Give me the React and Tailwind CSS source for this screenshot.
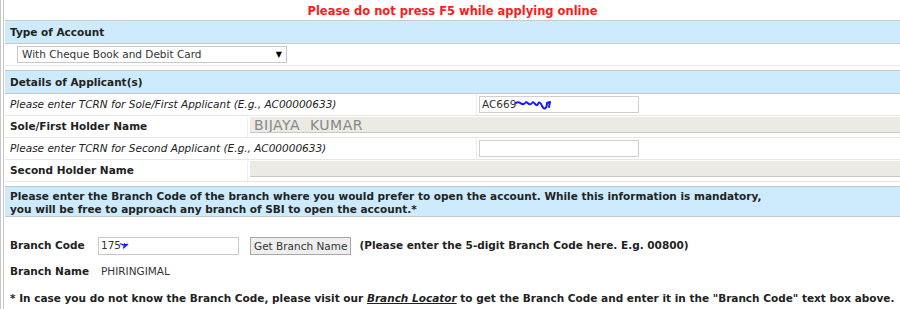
import React from "react";

const Scribble = ({ className, d }) => (
  <svg className={className} viewBox="0 0 40 14" fill="none" stroke="#1a1aff" strokeWidth="2" strokeLinecap="round" strokeLinejoin="round">
    <path d={d} />
  </svg>
);

const SectionHeader = ({ children }) => (
  <div className="bg-[#cdebfc] border-y border-[#c8c8c8] px-[5px] py-[4px] font-bold text-[#222] leading-[14px]">
    {children}
  </div>
);

const TcrnRow = ({ label, value }) => (
  <div className="flex h-[22px] border-b border-[#e6e6e6]">
    <div className="w-[472px] pl-[5px] italic text-[#222] border-r border-[#eeeeee] flex items-center">{label}</div>
    <div className="flex items-center pl-[2px]">
      <div className="relative w-[160px] h-[17px] border border-[#cfcfcf] bg-white flex items-center pl-[2px] text-[#333]">
        {value}
      </div>
    </div>
  </div>
);

const NameRow = ({ label, value }) => (
  <div className="flex h-[22px] border-b border-[#e6e6e6] pt-[1px]">
    <div className="w-[243px] shrink-0 pl-[5px] font-bold text-[#222] border-r border-[#eeeeee] flex items-center">{label}</div>
    <div className="flex-1 pl-[2px]">
      <div className="h-[16px] bg-[#ebebe4] border-b border-[#c8c8c8] pl-[4px] text-[14px] leading-[17px] text-[#888] tracking-[0.5px] whitespace-pre overflow-hidden">
        {value}
      </div>
    </div>
  </div>
);

export default function App() {
  return (
    <div className="w-[900px] h-[309px] bg-white overflow-hidden text-[10.5px] font-['DejaVu_Sans','Liberation_Sans',sans-serif]">
      <div className="h-full border-l-4 border-double border-[#c8c8c8] pl-[1px]">
        <div className="h-[20px] pt-[3px] flex items-center justify-center font-bold text-[11.5px] text-[#ff1a1a]">
          Please do not press F5 while applying online
        </div>

        <SectionHeader>Type of Account</SectionHeader>
        <div className="h-[22px] border-b border-[#e6e6e6] flex items-center pl-[12px]">
          <div className="w-[270px] h-[17px] border border-[#c8c8c8] bg-white flex items-center justify-between px-[4px] text-[#333]">
            <span>With Cheque Book and Debit Card</span>
            <span className="text-[8px] text-black">▼</span>
          </div>
        </div>

        <div className="h-[4px]" />
        <SectionHeader>Details of Applicant(s)</SectionHeader>

        <TcrnRow
          label="Please enter TCRN for Sole/First Applicant (E.g., AC00000633)"
          value={
            <>
              <span>AC669</span>
              <Scribble className="w-[40px] h-[14px] -ml-[2px]" d="M2 5 C6 2 8 9 11 5 C13 2 15 9 18 5 C20 2 22 10 24 6 C25 3 27 5 28 8 C30 12 33 11 33 5 L36 4 L35 9" />
            </>
          }
        />
        <NameRow label="Sole/First Holder Name" value="BIJAYA  KUMAR" />
        <TcrnRow label="Please enter TCRN for Second Applicant (E.g., AC00000633)" value="" />
        <NameRow label="Second Holder Name" value="" />

        <div className="h-[4px]" />
        <div className="bg-[#cdebfc] border-y border-[#c8c8c8] px-[5px] pt-[3px] font-bold text-[#222] leading-[13px]">
          Please enter the Branch Code of the branch where you would prefer to open the account. While this information is mandatory,
          <br />
          you will be free to approach any branch of SBI to open the account.*
        </div>

        <div className="pl-[5px] mt-[20px] flex items-center h-[18px] text-[#222]">
          <span className="font-bold w-[88px]">Branch Code</span>
          <div className="w-[141px] h-[18px] border border-[#c8c8c8] flex items-center pl-[2px] text-[#333]">
            <span>175</span>
            <Scribble className="w-[22px] h-[12px] -ml-[2px]" d="M2 3 L10 5 L8 11 L16 4 L6 5 M10 3 L12 7" />
          </div>
          <button className="ml-[11px] h-[18px] px-[3px] border border-[#a8a8a8] bg-[#eeeeee] text-[#333] text-[10.5px] leading-[14px]">
            Get Branch Name
          </button>
          <span className="ml-[8px] font-bold">(Please enter the 5-digit Branch Code here. E.g. 00800)</span>
        </div>

        <div className="pl-[5px] mt-[10px] h-[14px] flex items-center text-[#222]">
          <span className="font-bold w-[91px]">Branch Name</span>
          <span className="text-[#333]">PHIRINGIMAL</span>
        </div>

        <div className="pl-[5px] mt-[12px] leading-[14px] font-bold text-[#222] whitespace-nowrap">
          * In case you do not know the Branch Code, please visit our{" "}
          <span className="italic underline">Branch Locator</span> to get the Branch Code and enter it in the "Branch Code" text box above.
        </div>
      </div>
    </div>
  );
}
